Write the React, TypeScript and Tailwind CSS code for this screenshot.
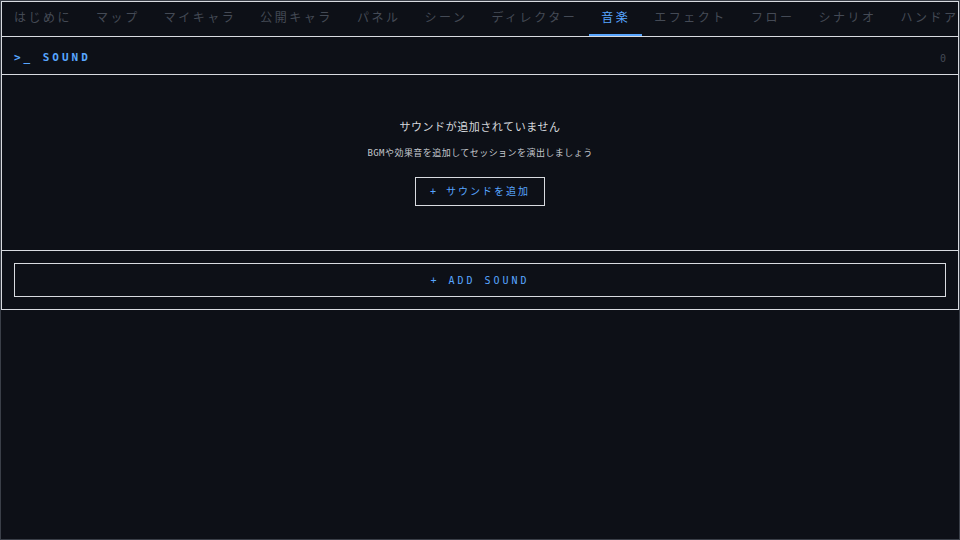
const TABS = [
  "はじめに",
  "マップ",
  "マイキャラ",
  "公開キャラ",
  "パネル",
  "シーン",
  "ディレクター",
  "音楽",
  "エフェクト",
  "フロー",
  "シナリオ",
  "ハンドアウト",
];

const ACTIVE = "音楽";

const mono = "font-['DejaVu_Sans_Mono','Noto_Sans_CJK_JP',monospace]";

export default function App() {
  return (
    <div
      className={`h-[540px] w-full overflow-hidden border border-[#3a3f48] bg-[#0d1017] ${mono}`}
    >
      <div className="border border-[#d8dbe0]">
        {/* Tabs */}
        <div className="flex h-[35px] overflow-hidden border-b border-[#d8dbe0]">
          {TABS.map((t) => {
            const active = t === ACTIVE;
            return (
              <div
                key={t}
                className={[
                  "flex h-full shrink-0 items-center border-b-2 px-3 text-xs tracking-[0.21em] whitespace-nowrap",
                  active
                    ? "border-[#58a6ff] text-[#58a6ff]"
                    : "border-transparent text-[#444a55]",
                ].join(" ")}
              >
                {t}
              </div>
            );
          })}
        </div>

        {/* Header */}
        <div className="flex h-[38px] items-center justify-between border-b border-[#d8dbe0] px-3 pt-[5px]">
          <span className="text-[11px] font-bold tracking-[0.27em] text-[#58a6ff]">
            &gt;_ SOUND
          </span>
          <span className="text-[10px] text-[#444a55]">0</span>
        </div>

        {/* Empty state */}
        <div className="flex h-[176px] flex-col items-center justify-center border-b border-[#d8dbe0]">
          <p className="text-[11px] tracking-[0.05em] text-[#d4d7dc]">
            サウンドが追加されていません
          </p>
          <p className="mt-[11px] text-[9px] tracking-[0.05em] text-[#c3c7cd]">
            BGMや効果音を追加してセッションを演出しましょう
          </p>
          <button className="mt-[16px] h-[29px] border border-[#d8dbe0] px-[14px] text-[10px] tracking-[0.2em] text-[#58a6ff]">
            + サウンドを追加
          </button>
        </div>

        {/* Add */}
        <div className="p-3">
          <button className="flex h-[34px] w-full items-center justify-center border border-[#d8dbe0] text-[10px] tracking-[0.3em] text-[#58a6ff]">
            + ADD SOUND
          </button>
        </div>
      </div>
    </div>
  );
}
